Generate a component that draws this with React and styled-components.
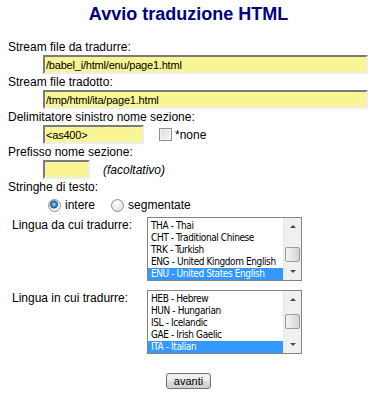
import React from "react";
import styled, { createGlobalStyle } from "styled-components";

const GlobalStyle = createGlobalStyle`
  html, body {
    margin: 0;
    padding: 0;
    background: #ffffff;
    overflow: hidden;
  }
  body {
    font-family: "Liberation Sans", Arial, sans-serif;
    color: #000000;
  }
`;

const sourceLangs = [
  "THA - Thai",
  "CHT - Traditional Chinese",
  "TRK - Turkish",
  "ENG - United Kingdom English",
  "ENU - United States English",
];

const targetLangs = [
  "HEB - Hebrew",
  "HUN - Hungarian",
  "ISL - Icelandic",
  "GAE - Irish Gaelic",
  "ITA - Italian",
];

const App = () => {
  return (
    <Page>
      <GlobalStyle />
      <Title>Avvio traduzione HTML</Title>

      <Label>Stream file da tradurre:</Label>
      <InputRow>
        <TextBox $w={325} defaultValue="/babel_i/html/enu/page1.html" readOnly />
      </InputRow>

      <Label>Stream file tradotto:</Label>
      <InputRow>
        <TextBox $w={325} defaultValue="/tmp/html/ita/page1.html" readOnly />
      </InputRow>

      <Label>Delimitatore sinistro nome sezione:</Label>
      <InputRow>
        <TextBox $w={101} defaultValue="<as400>" readOnly />
        <CheckBox />
        <Inline>*none</Inline>
      </InputRow>

      <Label>Prefisso nome sezione:</Label>
      <InputRow>
        <TextBox $w={47} defaultValue="" readOnly />
        <Hint>(facoltativo)</Hint>
      </InputRow>

      <Label>Stringhe di testo:</Label>
      <RadioRow>
        <Radio $checked />
        <RadioText>intere</RadioText>
        <Radio $gap />
        <RadioText>segmentate</RadioText>
      </RadioRow>

      <LangGrid>
        <LangLabel>Lingua da cui tradurre:</LangLabel>
        <ListBox>
          <Items>
            {sourceLangs.map((l, i) => (
              <Item key={l} $selected={i === sourceLangs.length - 1}>
                {l}
              </Item>
            ))}
          </Items>
          <ScrollBar>
            <Arrow $up />
            <Thumb $top={12} />
            <Spacer />
            <Arrow />
          </ScrollBar>
        </ListBox>

        <LangLabel>Lingua in cui tradurre:</LangLabel>
        <ListBox>
          <Items>
            {targetLangs.map((l, i) => (
              <Item key={l} $selected={i === targetLangs.length - 1}>
                {l}
              </Item>
            ))}
          </Items>
          <ScrollBar>
            <Arrow $up />
            <Thumb $top={6} />
            <Spacer />
            <Arrow />
          </ScrollBar>
        </ListBox>
      </LangGrid>

      <ButtonRow>
        <Button type="button">avanti</Button>
      </ButtonRow>
    </Page>
  );
};

export default App;

const Page = styled.div`
  width: 361px;
  padding: 4px 0 0 8px;
`;

const Title = styled.h1`
  margin: 0 0 14px;
  font-size: 18px;
  line-height: 21px;
  font-weight: bold;
  color: #000080;
  text-align: center;
`;

const Label = styled.div`
  height: 16px;
  font-size: 12px;
  line-height: 16px;
  white-space: nowrap;
`;

const InputRow = styled.div`
  display: flex;
  align-items: center;
  height: 19px;
  padding-left: 35px;
`;

const TextBox = styled.input`
  box-sizing: border-box;
  width: ${(p) => p.$w}px;
  height: 19px;
  margin: 0;
  padding: 0 0 0 1px;
  border: 2px solid;
  border-color: #7b7b7b #ededed #ededed #7b7b7b;
  background: #f8f594;
  font-family: "Liberation Sans", Arial, sans-serif;
  font-size: 11px;
  letter-spacing: -0.2px;
  color: #000000;
  outline: none;
`;

const CheckBox = styled.span`
  box-sizing: border-box;
  width: 13px;
  height: 13px;
  margin-left: 15px;
  border: 1px solid #8e8f8f;
  background: linear-gradient(135deg, #dcdcdc, #f7f7f7);
  box-shadow: inset 0 0 0 1px #f4f4f4;
`;

const Inline = styled.span`
  margin-left: 3px;
  font-size: 12px;
`;

const Hint = styled.span`
  margin-left: 13px;
  font-size: 12px;
  font-style: italic;
`;

const RadioRow = styled.div`
  display: flex;
  align-items: center;
  height: 20px;
  padding-left: 40px;
`;

const Radio = styled.span`
  box-sizing: border-box;
  width: 13px;
  height: 13px;
  margin-left: ${(p) => (p.$gap ? 16 : 0)}px;
  border-radius: 50%;
  border: 1px solid #8e8f8f;
  background: ${(p) =>
    p.$checked
      ? "radial-gradient(circle at 45% 40%, #bfe3ff 0, #3a8fd6 2px, #1c5f9e 3.5px, #e6e6e6 4.5px, #f6f6f6 6px)"
      : "radial-gradient(circle at 40% 35%, #ffffff 0, #e4e4e4 6px)"};
`;

const RadioText = styled.span`
  margin-left: 4px;
  font-size: 12px;
`;

const LangGrid = styled.div`
  display: grid;
  grid-template-columns: 139px 155px;
  row-gap: 9px;
  margin-top: 2px;
`;

const LangLabel = styled.div`
  padding-left: 4px;
  font-size: 12px;
  line-height: 16px;
  white-space: nowrap;
`;

const ListBox = styled.div`
  box-sizing: border-box;
  display: flex;
  height: 64px;
  border: 1px solid #848484;
  background: #ffffff;
`;

const Items = styled.div`
  flex: 1;
  padding-top: 2px;
  overflow: hidden;
`;

const Item = styled.div`
  height: 12px;
  padding-left: 3px;
  font-family: "DejaVu Sans Condensed", "DejaVu Sans", sans-serif;
  font-size: 10px;
  letter-spacing: -0.4px;
  line-height: 12px;
  white-space: nowrap;
  color: ${(p) => (p.$selected ? "#ffffff" : "#000000")};
  background: ${(p) => (p.$selected ? "#3399ff" : "transparent")};
`;

const ScrollBar = styled.div`
  display: flex;
  flex-direction: column;
  width: 17px;
  background: #f0f0f0;
  border-left: 1px solid #e8e8e8;
`;

const Arrow = styled.div`
  height: 17px;
  display: flex;
  align-items: center;
  justify-content: center;
  &::before {
    content: "";
    border-left: 3px solid transparent;
    border-right: 3px solid transparent;
    ${(p) =>
      p.$up
        ? "border-bottom: 3px solid #4a4a4a;"
        : "border-top: 3px solid #4a4a4a;"}
  }
`;

const Thumb = styled.div`
  box-sizing: border-box;
  height: 15px;
  margin: ${(p) => p.$top}px 1px 0;
  border: 1px solid #9a9a9a;
  border-radius: 2px;
  background: linear-gradient(90deg, #f4f4f4, #e0e0e0 60%, #d4d4d4);
`;

const Spacer = styled.div`
  flex: 1;
`;

const ButtonRow = styled.div`
  display: flex;
  justify-content: center;
  margin-top: 19px;
`;

const Button = styled.button`
  box-sizing: border-box;
  width: 45px;
  height: 16px;
  padding: 0;
  border: 1px solid #707070;
  border-radius: 3px;
  background: linear-gradient(#f2f2f2, #ebebeb 50%, #dddddd 51%, #cfcfcf);
  font-family: "Liberation Sans", Arial, sans-serif;
  font-size: 11px;
  line-height: 14px;
  color: #000000;
`;
